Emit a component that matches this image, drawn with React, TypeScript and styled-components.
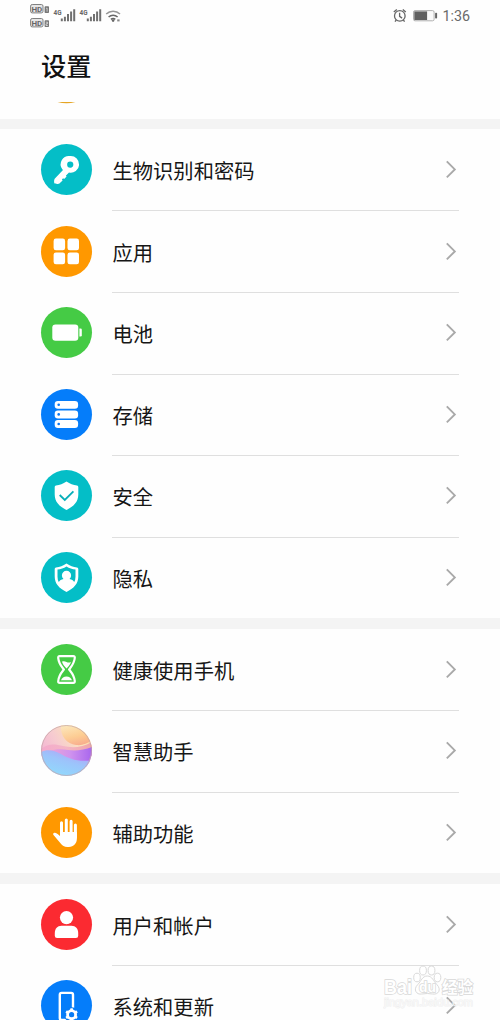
import React from 'react';
import styled, { createGlobalStyle, css } from 'styled-components';

const GlobalStyle = createGlobalStyle`
  * { box-sizing: border-box; }
  html, body { margin: 0; background: #fefefe; }
  body { overflow: hidden; font-family: "Noto Sans CJK SC", sans-serif; color: #161616; }
  svg { display: block; flex: none; }
`;

const Screen = styled.main`
  position: relative;
  display: flex;
  flex-direction: column;
  width: 500px;
  height: 1020px;
  overflow: hidden;
  background: #fefefe;
`;

const StatusBar = styled.header`
  display: flex;
  justify-content: space-between;
  flex: none;
  height: 32px;
  padding: 0 30px;
`;

const StatusGroup = styled.div`
  display: flex;
  align-items: center;
`;

const Clock = styled.span`
  margin-left: 3px;
  font: 14.3px/16px Roboto, sans-serif;
  color: #6a6a6a;
`;

const TitleBar = styled.div`
  display: flex;
  align-items: center;
  flex: none;
  height: 68px;
  padding: 0 41px 2px;
`;

const Title = styled.h1`
  margin: 0;
  font-size: 25.2px;
  line-height: 36px;
  font-weight: 500;
  color: #111;
`;

const ScrolledRow = styled.div`
  flex: none;
  height: 18.6px;
  padding: 1px 41px 0;
`;

const Band = styled.div`
  flex: none;
  height: 10.2px;
  background: #f4f4f4;
`;

const Group = styled.section`
  flex: none;
`;

const RowBody = styled.div`
  display: flex;
  flex: 1;
  align-items: center;
  justify-content: space-between;
  height: 100%;
  border-top: 1px solid transparent;
`;

const Row = styled.div`
  display: flex;
  align-items: center;
  gap: 20px;
  height: 81.6px;
  padding: 0 41px;

  & + & ${RowBody} { border-top-color: #dfdfdf; }
`;

const Disc = styled.div<{ $color: string }>`
  display: flex;
  flex: none;
  width: 51px;
  height: 51px;
  border-radius: 50%;
  overflow: hidden;
  background: ${p => p.$color};
`;

const Label = styled.span`
  padding-left: 0.5px;
  font-size: 20.3px;
  line-height: 26px;
  white-space: nowrap;
`;

const Watermark = styled.div`
  position: absolute;
  left: 383px;
  top: 965px;
  width: 92px;
  height: 46px;
`;

const markText = css`
  font-family: "Liberation Sans", "Noto Sans CJK SC", sans-serif;
  fill: #fff;
  stroke: #d8d8d8;
  paint-order: stroke;
`;

const MarkName = styled.text<{ $size: number }>`
  ${markText}
  font-size: ${p => p.$size}px;
  font-weight: 700;
  stroke-width: 1.5px;
`;

const MarkSite = styled.text`
  ${markText}
  font-size: 11px;
  stroke-width: 1px;
  stroke: #e9e9e9;
  fill-opacity: 0.6;
  stroke-opacity: 0.7;
`;

const TinyText = styled.text`
  font-family: Roboto, sans-serif;
  font-weight: 700;
  fill: #666;
`;

const Signals = () => (
  <svg width="92" height="32" viewBox="30 0 92 32">
    {[4.5, 18.5].map((y, i) => (
      <g key={y}>
        <rect x="30.6" y={y} width="12.4" height="8.4" rx="1.6" fill="#e6e6e6" stroke="#808080" />
        <TinyText x="31.4" y={y + 7.1} fontSize="8" textLength="10.8" lengthAdjust="spacingAndGlyphs">HD</TinyText>
        <rect x="44.6" y={y + 1.8} width="4.4" height="6.8" rx="0.8" fill="#777" />
        <path d={i ? `M45.8 ${y + 3.7}h1.8v1.6h-1.6v1.7h1.8` : `M46.1 ${y + 3.9}l1-.4v3.7`} fill="none" stroke="#eee" strokeWidth="0.7" />
      </g>
    ))}
    {[0, 26].map(x => (
      <g key={x} transform={`translate(${x} 0)`}>
        <TinyText x="53.6" y="14.8" fontSize="7" textLength="8" lengthAdjust="spacingAndGlyphs">4G</TinyText>
        <path d="M60.8 18.6h2v2.7h-2zM63.9 16.8h2v4.5h-2zM67 14h2v7.3h-2zM70.1 11.5h2v9.8h-2zM73.2 9.2h2v12.1h-2z" fill="#707070" />
      </g>
    ))}
    <g fill="none" stroke="#666" strokeWidth="1.5">
      <path d="M106.2 14a10 10 0 0 1 13.8 0" stroke="#959595" />
      <path d="M108.6 17a6.6 6.6 0 0 1 9 0M110.9 19.4a3.3 3.3 0 0 1 4.4 0" />
    </g>
    <circle cx="113.1" cy="20.6" r="1.3" fill="#666" />
    <path d="M117.2 19.4h2.4v2h-2.4z" fill="#888" />
  </svg>
);

const DeviceStatus = () => (
  <svg width="46" height="32" viewBox="394 0 46 32">
    <g fill="none" stroke="#666" strokeWidth="1.3">
      <circle cx="400.8" cy="15.9" r="5.3" />
      <path d="M400.6 12.7v3.6l2.5 1.8M394.8 12l3-2.6M406.8 12l-3-2.6M397.3 20l-1.3 1.7M404.3 20l1.3 1.7" />
    </g>
    <rect x="414.5" y="10.6" width="20.6" height="10.2" rx="1.5" fill="#fafafa" stroke="#b0b0b0" />
    <rect x="415.3" y="11.4" width="12.8" height="8.6" fill="#606060" />
    <rect x="436.1" y="12.8" width="2" height="5.8" rx="0.8" fill="#666" />
  </svg>
);

const Chevron = () => (
  <svg width="13" height="20" viewBox="0 0 13 20" fill="none" stroke="#a9a9a9" strokeWidth="1.9">
    <path d="M.8 1.4 8.8 9.4.8 17.4" />
  </svg>
);

const Glyph = ({ children }: { children: React.ReactNode }) => (
  <svg width="51" height="51" viewBox="0 0 51 51" fill="#fff">{children}</svg>
);

const KeyGlyph = () => (
  <Glyph>
    <path fillRule="evenodd" d="M29.2 12a8.4 8.4 0 1 1-1.2 16.6l-3.2 3.2.8.8-2.5 2.5-1-.8-1.2 1.2.7.9-3.2 3.1c-.8.7-4.6.5-5-.2-.5-.8-.4-3.7.3-4.5L22 26.1l-.7-.8A8.4 8.4 0 0 1 29.2 12zm0 5.5a3.1 3.1 0 1 0 .1 6.2 3.1 3.1 0 0 0-.1-6.2z" />
  </Glyph>
);

const AppsGlyph = () => (
  <Glyph>
    {[12.6, 26.5].map(x => [12.6, 26.5].map(y => <rect key={`${x}-${y}`} x={x} y={y} width="11.5" height="11.7" rx="2.3" />))}
  </Glyph>
);

const BatteryGlyph = () => (
  <Glyph>
    <rect x="11.3" y="17.4" width="26" height="16.4" rx="3.2" />
    <path d="M38.4 21.5h1.1a1.3 1.3 0 0 1 1.3 1.3v5.4a1.3 1.3 0 0 1-1.3 1.3h-1.1z" />
  </Glyph>
);

const StorageGlyph = () => (
  <Glyph>
    {[11.9, 21.5, 31.1].map(y => (
      <g key={y}>
        <rect x="13.7" y={y} width="23.4" height="7.9" rx="3.2" />
        <circle cx="17.7" cy={y + 3.9} r="1.3" fill="#0a78f5" />
      </g>
    ))}
  </Glyph>
);

const SHIELD = 'M25.5 11.4c3.5 2.4 6.7 3.5 10.5 4q1.3.2 1.3 1.7v7.4c0 7.2-4.5 12-11.8 15.4-7.3-3.4-11.8-8.2-11.8-15.4v-7.4q0-1.5 1.3-1.7c3.8-.5 7-1.6 10.5-4z';

const SecurityGlyph = () => (
  <Glyph>
    <path d={SHIELD} />
    <path d="m18.7 25 5.1 5 8.6-8.6" fill="none" stroke="#08afb9" strokeWidth="1.8" />
  </Glyph>
);

const PrivacyGlyph = () => (
  <Glyph>
    <path d={SHIELD} />
    <path d="M25.5 14.4c2.8 1.7 5.7 2.6 9 3.1v7.2q0 3-1.3 5.3c-.9-1.6-2.3-2.7-4.7-3.1a4.6 4.6 0 1 0-6 0c-2.4.4-3.8 1.5-4.7 3.1q-1.3-2.3-1.3-5.3v-7.2c3.3-.5 6.2-1.4 9-3.1z" fill="#06bdc5" />
  </Glyph>
);

const HourglassGlyph = () => (
  <Glyph>
    <path
      d="M18.7 12.2h13.6q1.6 0 1.5 1.6c-.4 5.5-3 8.3-5.7 11.7 2.7 3.4 5.3 6.2 5.7 11.7q.1 1.6-1.5 1.6H18.7q-1.6 0-1.5-1.6c.4-5.5 3-8.3 5.7-11.7-2.7-3.4-5.3-6.2-5.7-11.7q-.1-1.6 1.5-1.6z"
      fill="none"
      stroke="#fff"
      strokeWidth="2.2"
      strokeLinejoin="round"
    />
    <path d="M21 17.8c1.5-.9 2.9-.4 4.5.3s3 .7 4.500-.2c-.8 2.600-2.300 4.200-4.500 6.500-2.200-2.300-3.700-4-4.500-6.600zM20 36.200c.8-2.100 2.800-3.600 5.500-3.600s4.700 1.500 5.500 3.600z" />
  </Glyph>
);

const AssistantGlyph = () => (
  <svg width="51" height="51" viewBox="0 0 51 51">
    <defs>
      <linearGradient id="sky" x1="0" y1="0.6" x2="1" y2="0">
        <stop offset="0" stopColor="#f3b3d3" />
        <stop offset=".35" stopColor="#f6cbd0" />
        <stop offset=".7" stopColor="#fbe3bb" />
        <stop offset="1" stopColor="#ffd98a" />
      </linearGradient>
      <linearGradient id="peach" x1="0.3" y1="0" x2=".7" y2="1">
        <stop offset="0" stopColor="#fde7b8" />
        <stop offset=".55" stopColor="#fdc98c" />
        <stop offset="1" stopColor="#f8a184" />
      </linearGradient>
      <linearGradient id="rose" x1="0" y1="0" x2="1" y2="0">
        <stop offset="0" stopColor="#f4a8cb" />
        <stop offset=".5" stopColor="#f3b0c4" />
        <stop offset="1" stopColor="#ee9aa6" />
      </linearGradient>
      <linearGradient id="violet" x1="0" y1="0" x2="1" y2="0">
        <stop offset="0" stopColor="#eba4d6" />
        <stop offset=".5" stopColor="#cf92ee" />
        <stop offset="1" stopColor="#a866ee" />
      </linearGradient>
      <linearGradient id="sea" x1="0.2" y1="1" x2=".8" y2="0">
        <stop offset="0" stopColor="#8fdcfc" />
        <stop offset=".55" stopColor="#9cc4fb" />
        <stop offset="1" stopColor="#b79cf6" />
      </linearGradient>
    </defs>
    <path d="M0 0h51v51H0z" fill="url(#sky)" />
    <path d="M20 0c-1 11 6 19 15 20 6 .7 11-1 16-5V0z" fill="url(#peach)" opacity=".85" />
    <path d="M0 24c7-6 14-5 22-3 9 2 18 2 29-4v16H0z" fill="url(#rose)" opacity=".85" />
    <path d="M8 26c6-2 13-2 19-1 8 1 16 0 24-3v20H20z" fill="url(#violet)" />
    <path d="M0 27c6-3 13-2 20 2 8 4.5 15 8 31 6.5V51H0z" fill="url(#sea)" />
    <circle cx="25.5" cy="25.5" r="25" fill="none" stroke="#c3a9ab" strokeWidth="1" opacity=".8" />
  </svg>
);

const HandGlyph = () => (
  <Glyph>
    <path d="M20.5 15.8V28M25.3 13v14M30.1 14.2V28M34.4 18.1V30" fill="none" stroke="#fff" strokeWidth="3" strokeLinecap="round" />
    <path d="M19 25h16.9v6.5c0 5-3.3 8.4-8 8.4h-1.6c-3 0-4.9-1.2-6.6-3.5l-7.2-8.3c-1-1.3.1-2.7 1.5-2.4q1.4.3 2.6 1.3L19 29z" />
  </Glyph>
);

const UserGlyph = () => (
  <Glyph>
    <circle cx="25.5" cy="18.6" r="6.6" />
    <path d="M20.5 26.7h10c4.2 0 6.6 3.1 6.7 7.2v2.9q0 2.3-2.3 2.3H16.1q-2.3 0-2.3-2.3v-2.9c.1-4.1 2.5-7.2 6.7-7.2z" />
  </Glyph>
);

const SystemGlyph = () => (
  <Glyph>
    <rect x="18.8" y="12.9" width="13.2" height="27" rx="1.8" fill="none" stroke="#fff" strokeWidth="2.4" />
    <circle cx="30.6" cy="34.7" r="7.5" fill="#087bf5" />
    <circle cx="30.6" cy="34.7" r="4" fill="none" stroke="#fff" strokeWidth="2.8" />
    {[0, 60, 120, 180, 240, 300].map(a => (
      <rect key={a} x="29.2" y="28.3" width="2.8" height="2.6" rx=".6" transform={`rotate(${a} 30.6 34.7)`} />
    ))}
  </Glyph>
);

type Item = { label: string; color: string; icon: React.ReactNode };

const groups: Item[][] = [
  [
    { label: '生物识别和密码', color: '#04bec7', icon: <KeyGlyph /> },
    { label: '应用', color: '#ff9800', icon: <AppsGlyph /> },
    { label: '电池', color: '#45cb45', icon: <BatteryGlyph /> },
    { label: '存储', color: '#057dfa', icon: <StorageGlyph /> },
    { label: '安全', color: '#04bec7', icon: <SecurityGlyph /> },
    { label: '隐私', color: '#04bec7', icon: <PrivacyGlyph /> },
  ],
  [
    { label: '健康使用手机', color: '#45cb45', icon: <HourglassGlyph /> },
    { label: '智慧助手', color: '#f5d5d5', icon: <AssistantGlyph /> },
    { label: '辅助功能', color: '#ff9800', icon: <HandGlyph /> },
  ],
  [
    { label: '用户和帐户', color: '#fb2a31', icon: <UserGlyph /> },
    { label: '系统和更新', color: '#057dfa', icon: <SystemGlyph /> },
  ],
];

export default function App() {
  return (
    <>
      <GlobalStyle />
      <Screen>
        <StatusBar>
          <StatusGroup><Signals /></StatusGroup>
          <StatusGroup><DeviceStatus /><Clock>1:36</Clock></StatusGroup>
        </StatusBar>
        <TitleBar><Title>设置</Title></TitleBar>
        <ScrolledRow>
          <svg width="51" height="4" viewBox="0 0 51 4">
            <path d="M16.5 .9h18q-9 2.8-18 0z" fill="#e5a524" />
          </svg>
        </ScrolledRow>
        {groups.map((items, i) => (
          <React.Fragment key={i}>
            <Band />
            <Group>
              {items.map(item => (
                <Row key={item.label}>
                  <Disc $color={item.color}>{item.icon}</Disc>
                  <RowBody>
                    <Label>{item.label}</Label>
                    <Chevron />
                  </RowBody>
                </Row>
              ))}
            </Group>
          </React.Fragment>
        ))}
        <Watermark>
          <svg width="92" height="46" viewBox="0 0 92 46">
            <g fill="#fff" stroke="#dadada" strokeWidth="1">
              <ellipse cx="34" cy="12.5" rx="3.3" ry="4.3" />
              <ellipse cx="40" cy="5.5" rx="3.4" ry="4.5" />
              <ellipse cx="48.5" cy="5.5" rx="3.4" ry="4.5" />
              <ellipse cx="54.5" cy="12.5" rx="3.3" ry="4.3" />
              <path d="M44.3 11c5 0 6 5 9.5 8.5 5 5 1.5 10.5-4 9.5q-5.5-1-11 0c-5.5 1-9-4.5-4-9.5 3.5-3.5 4.5-8.5 9.5-8.5z" />
            </g>
            <MarkName $size={20} x="1" y="29" textLength="28" lengthAdjust="spacingAndGlyphs">Bai</MarkName>
            <MarkName $size={14} x="36" y="27" textLength="17" lengthAdjust="spacingAndGlyphs">du</MarkName>
            <MarkName $size={16} x="59" y="28" textLength="31" lengthAdjust="spacingAndGlyphs">经验</MarkName>
            <MarkSite x="1" y="41" textLength="89" lengthAdjust="spacingAndGlyphs">jingyan.baidu.com</MarkSite>
          </svg>
        </Watermark>
      </Screen>
    </>
  );
}
